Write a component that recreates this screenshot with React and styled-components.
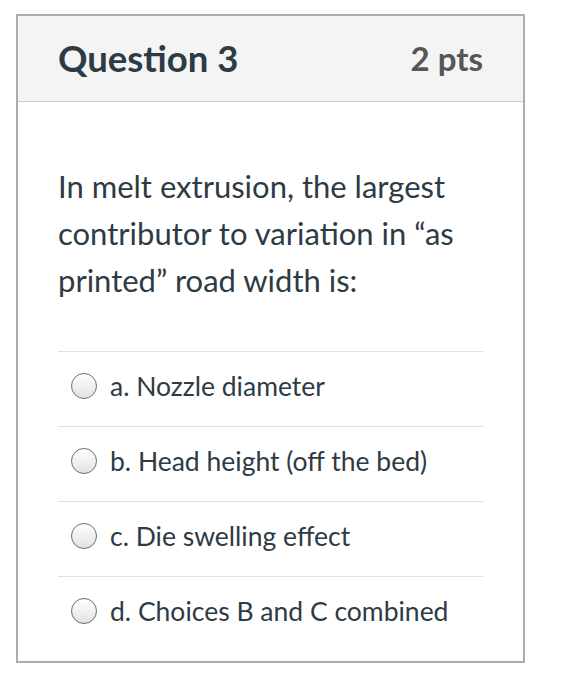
import styled, { createGlobalStyle } from 'styled-components'

const GlobalStyle = createGlobalStyle`
  body {
    margin: 0;
    background: #fff;
    font-family: Lato, "Noto Sans", sans-serif;
  }
`

const options = [
  'a. Nozzle diameter',
  'b. Head height (off the bed)',
  'c. Die swelling effect',
  'd. Choices B and C combined',
]

const App = () => {
  return (
    <Page>
      <GlobalStyle />
      <Card>
        <Header>
          <Title>Question 3</Title>
          <Points>2 pts</Points>
        </Header>
        <Body>
          <Prompt>
            In melt extrusion, the largest contributor to variation in “as
            printed” road width is:
          </Prompt>
          <Answers>
            {options.map((text) => (
              <Answer key={text}>
                <Radio />
                <span>{text}</span>
              </Answer>
            ))}
          </Answers>
        </Body>
      </Card>
    </Page>
  )
}

const Page = styled.div`
  padding: 14px 0 0 16px;
`

const Card = styled.div`
  width: 509px;
  height: 649px;
  box-sizing: border-box;
  border: 2px solid #adadad;
  background: #fff;
`

const Header = styled.div`
  display: flex;
  align-items: center;
  justify-content: space-between;
  height: 86px;
  box-sizing: border-box;
  padding: 0 40px 2px 40px;
  background: #f4f4f4;
  border-bottom: 1px solid #c7cdd1;
`

const Title = styled.div`
  font-size: 36.5px;
  font-weight: 700;
  color: #2d3b45;
`

const Points = styled.div`
  font-size: 33px;
  font-weight: 700;
  color: #565656;
`

const Body = styled.div`
  padding: 61px 39px 0 40px;
`

const Prompt = styled.div`
  font-size: 31px;
  line-height: 47px;
  color: #2d3b45;
  margin-bottom: 47px;
`

const Answers = styled.div`
  display: flex;
  flex-direction: column;
`

const Answer = styled.label`
  display: flex;
  align-items: center;
  height: 75px;
  box-sizing: border-box;
  padding-bottom: 7px;
  border-top: 1px solid #dfe2e4;
  font-size: 26.5px;
  color: #2d3b45;
  span {
    margin-left: 13px;
  }
`

const Radio = styled.span`
  width: 26px;
  height: 26px;
  margin-left: 7px;
  border-radius: 50%;
  border: 1.5px solid #6d6d6d;
  background: linear-gradient(#ffffff, #e2e2e2);
  box-sizing: border-box;
  flex-shrink: 0;
`

export default App
